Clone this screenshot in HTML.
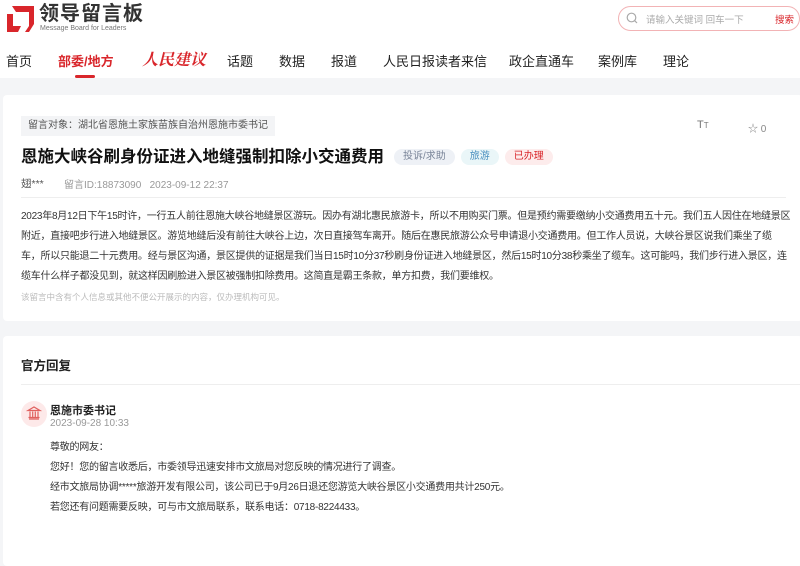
<!DOCTYPE html>
<html><head><meta charset="utf-8"><style>
*{margin:0;padding:0;box-sizing:border-box}
body{width:800px;height:555px;overflow:hidden;background:#f4f5f7;font-family:"Liberation Sans","Noto Sans CJK SC",sans-serif;color:#333;position:relative}
.hdr{position:absolute;left:0;top:0;width:800px;height:78px;background:#fff}
.a{position:absolute;white-space:nowrap}
.nav{font-size:13px;color:#222;top:51px}
.card{position:absolute;background:#fff;border-radius:4px}
.p{font-size:10px;letter-spacing:-0.25px;color:#333;line-height:20px}
.tag{display:inline-block;font-size:10px;font-weight:normal;padding:0 9px;height:16px;line-height:16px;border-radius:8px;margin-left:6px;vertical-align:3px}
</style></head><body>
<div class="hdr"></div>
<svg class="a" style="left:7px;top:6px" width="27" height="26" viewBox="0 0 27 26"><path d="M5 0H27V18L22 26H18L22 20V6H9Z" fill="#d9262b"/><path d="M0 8H6V20H14L11 26H0Z" fill="#d9262b"/></svg>
<div class="a" style="left:39px;top:3px;font-size:20px;line-height:22px;font-weight:bold;color:#333;letter-spacing:1px">领导留言板</div>
<div class="a" style="left:40px;top:25px;font-size:7px;line-height:8px;color:#777">Message Board for Leaders</div>
<div class="a" style="left:618px;top:6px;width:182px;height:25px;border:1px solid #f2b3b5;border-radius:13px;background:#fff"></div>
<svg class="a" style="left:626px;top:12px" width="12" height="12"><circle cx="5.5" cy="5.5" r="4.3" fill="none" stroke="#aaa" stroke-width="1.2"/><path d="M8.6 8.6L11 11" stroke="#aaa" stroke-width="1.2"/></svg>
<div class="a" style="left:646px;top:12px;font-size:9.5px;color:#aaa">请输入关键词 回车一下</div>
<div class="a" style="left:775px;top:12px;font-size:9.5px;color:#d9262b">搜索</div>
<div class="a nav" style="left:6px">首页</div>
<div class="a nav" style="left:58px;color:#d9262b;font-weight:bold">部委/地方</div>
<div class="a" style="left:75px;top:75px;width:20px;height:3px;background:#d9262b;border-radius:2px"></div>
<div class="a nav" style="left:142px;top:47px;color:#d9262b;font-size:16px;font-style:italic;font-family:'Noto Serif CJK SC',serif;font-weight:bold">人民建议</div>
<div class="a nav" style="left:227px">话题</div>
<div class="a nav" style="left:279px">数据</div>
<div class="a nav" style="left:331px">报道</div>
<div class="a nav" style="left:383px">人民日报读者来信</div>
<div class="a nav" style="left:509px">政企直通车</div>
<div class="a nav" style="left:598px">案例库</div>
<div class="a nav" style="left:663px">理论</div>

<div class="card" style="left:3px;top:95px;width:800px;height:226px"></div>
<div class="a" style="left:21px;top:116px;height:20px;padding:0 7px;background:#f3f4f6;font-size:10px;line-height:20px;color:#555">留言对象：湖北省恩施土家族苗族自治州恩施市委书记</div>
<div class="a" style="left:697px;top:119px;font-size:11px;color:#777">T<span style="font-size:8px">T</span></div>
<div class="a" style="left:748px;top:120px;font-size:10px;color:#888">☆ 0</div>
<div class="a" style="left:21px;top:143px;font-size:16.5px;font-weight:bold;color:#111">恩施大峡谷刷身份证进入地缝强制扣除小交通费用<span class="tag" style="margin-left:10px;background:#eef1f6;color:#7a8599">投诉/求助</span><span class="tag" style="background:#eaf6f8;color:#4a8fbf">旅游</span><span class="tag" style="background:#fdecec;color:#d9262b">已办理</span></div>
<div class="a" style="left:21px;top:176px;font-size:10.5px;color:#555">翅***</div>
<div class="a" style="left:64px;top:176px;font-size:10px;color:#999">留言ID:18873090&nbsp;&nbsp;&nbsp;2023-09-12 22:37</div>
<div class="a" style="left:21px;top:197px;width:765px;height:1px;background:#eee"></div>
<div class="a p" style="left:21px;top:207px">2023年8月12日下午15时许，一行五人前往恩施大峡谷地缝景区游玩。因办有湖北惠民旅游卡，所以不用购买门票。但是预约需要缴纳小交通费用五十元。我们五人因住在地缝景区<br>附近，直接吧步行进入地缝景区。游览地缝后没有前往大峡谷上边，次日直接驾车离开。随后在惠民旅游公众号申请退小交通费用。但工作人员说，大峡谷景区说我们乘坐了缆<br>车，所以只能退二十元费用。经与景区沟通，景区提供的证据是我们当日15时10分37秒刷身份证进入地缝景区，然后15时10分38秒乘坐了缆车。这可能吗，我们步行进入景区，连<br>缆车什么样子都没见到，就这样因刷脸进入景区被强制扣除费用。这简直是霸王条款，单方扣费，我们要维权。</div>
<div class="a" style="left:21px;top:291px;font-size:8.5px;color:#bbb">该留言中含有个人信息或其他不便公开展示的内容，仅办理机构可见。</div>

<div class="card" style="left:3px;top:336px;width:800px;height:230px"></div>
<div class="a" style="left:21px;top:355px;font-size:12.5px;font-weight:bold;color:#222">官方回复</div>
<div class="a" style="left:21px;top:384px;width:780px;height:1px;background:#eee"></div>
<div class="a" style="left:21px;top:401px;width:26px;height:26px;border-radius:13px;background:#fde9e9"></div>
<svg class="a" style="left:26px;top:405px" width="16" height="16" viewBox="0 0 16 16" fill="none" stroke="#e0605e" stroke-width="1.2"><path d="M2 5.5L8 2L14 5.5Z M3 14H13 M4 6.5V12.5 M6.7 6.5V12.5 M9.3 6.5V12.5 M12 6.5V12.5 M2.5 12.5H13.5"/></svg>
<div class="a" style="left:50px;top:402px;font-size:11px;font-weight:bold;color:#222">恩施市委书记</div>
<div class="a" style="left:50px;top:418px;font-size:10px;color:#999">2023-09-28 10:33</div>
<div class="a p" style="left:50px;top:438px">尊敬的网友：<br>您好！您的留言收悉后，市委领导迅速安排市文旅局对您反映的情况进行了调查。<br>经市文旅局协调*****旅游开发有限公司，该公司已于9月26日退还您游览大峡谷景区小交通费用共计250元。<br>若您还有问题需要反映，可与市文旅局联系，联系电话：0718-8224433。</div>
</body></html>
